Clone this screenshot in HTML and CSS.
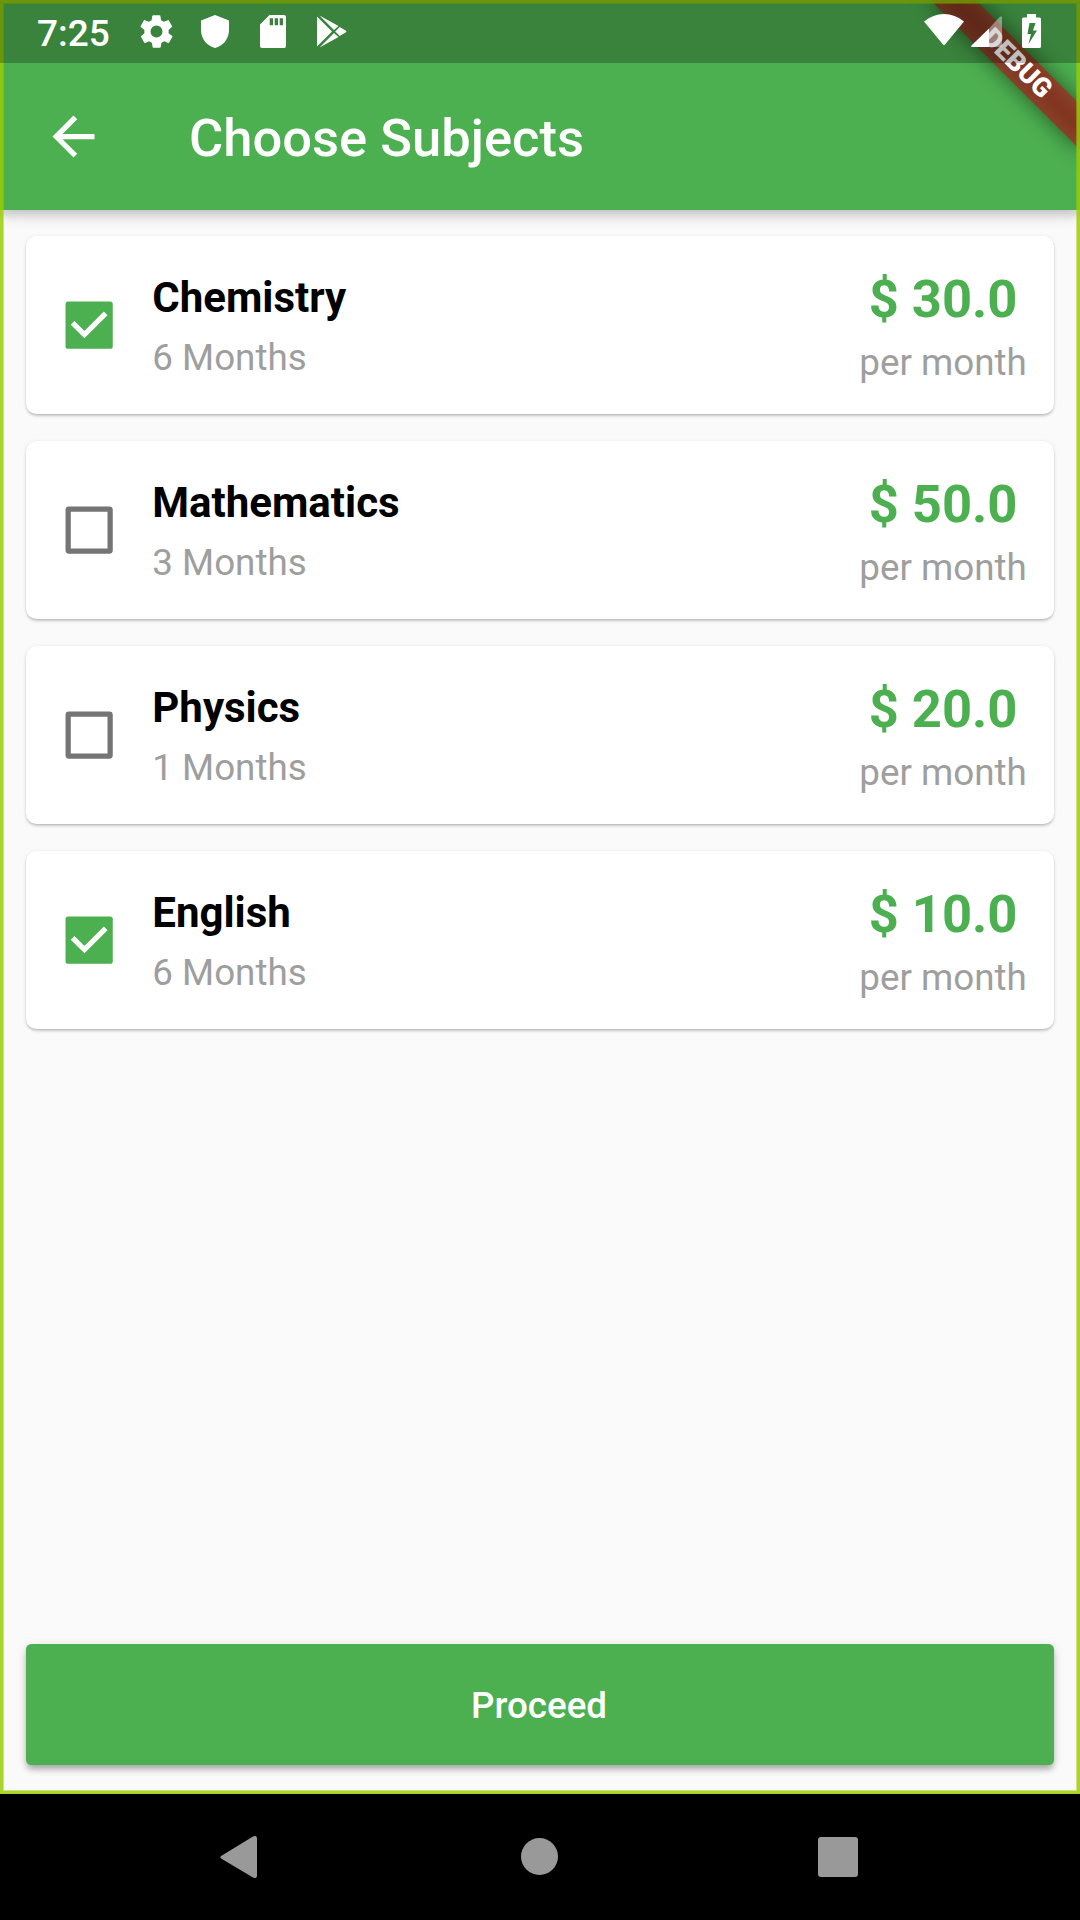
FILE: index.html
```html
<!DOCTYPE html>
<html lang="en">
<head>
<meta charset="utf-8">
<title>Choose Subjects</title>
<link rel="stylesheet" href="styles.css">
</head>
<body>
<div class="screen">
  <main class="app">
    <header class="app-bar">
      <svg class="back" viewBox="0 0 24 24"><path d="M20 11H7.83l5.59-5.59L12 4l-8 8 8 8 1.41-1.41L7.83 13H20v-2z"/></svg>
      <h1 class="title">Choose Subjects</h1>
    </header>
    <section class="list">
      <article class="card">
        <svg class="check" viewBox="-.2 -.2 18.29 18.29"><rect class="box-on" width="18" height="18" rx="1"/><path class="tick" d="M2.7 8.1L7.2 12.6L15.3 4.5"/></svg>
        <div class="info"><h2 class="name">Chemistry</h2><p class="note">6 Months</p></div>
        <div class="cost"><p class="price">$ 30.0</p><p class="note">per month</p></div>
      </article>
      <article class="card">
        <svg class="check" viewBox="-.2 -.2 18.29 18.29"><rect class="box-off" x="1" y="1" width="16" height="16" rx=".3"/></svg>
        <div class="info"><h2 class="name">Mathematics</h2><p class="note">3 Months</p></div>
        <div class="cost"><p class="price">$ 50.0</p><p class="note">per month</p></div>
      </article>
      <article class="card">
        <svg class="check" viewBox="-.2 -.2 18.29 18.29"><rect class="box-off" x="1" y="1" width="16" height="16" rx=".3"/></svg>
        <div class="info"><h2 class="name">Physics</h2><p class="note">1 Months</p></div>
        <div class="cost"><p class="price">$ 20.0</p><p class="note">per month</p></div>
      </article>
      <article class="card">
        <svg class="check" viewBox="-.2 -.2 18.29 18.29"><rect class="box-on" width="18" height="18" rx="1"/><path class="tick" d="M2.7 8.1L7.2 12.6L15.3 4.5"/></svg>
        <div class="info"><h2 class="name">English</h2><p class="note">6 Months</p></div>
        <div class="cost"><p class="price">$ 10.0</p><p class="note">per month</p></div>
      </article>
    </section>
    <button class="proceed" type="button">Proceed</button>
    <div class="banner">DEBUG</div>
    <div class="outline"></div>
  </main>
  <div class="status">
    <span class="clock">7:25</span>
    <svg class="icon gear" viewBox="0 0 24 24"><path d="M19.4 13c0-.3.1-.6.1-1s0-.7-.1-1l2.100-1.700c.2-.1.200-.4.100-.6l-2-3.500c-.1-.2-.4-.3-.6-.2l-2.500 1c-.5-.4-1.100-.7-1.700-1l-.4-2.600c0-.2-.2-.4-.5-.4h-4c-.2 0-.4.2-.5.4l-.4 2.600c-.6.3-1.200.6-1.700 1l-2.500-1c-.2-.1-.5 0-.6.2l-2 3.500c-.1.2-.1.5.1.6L4.600 11c0 .3-.1.700-.1 1s0 .7.100 1l-2.100 1.700c-.2.1-.2.400-.1.600l2 3.500c.1.2.4.3.6.2l2.500-1c.5.4 1.100.7 1.700 1l.4 2.600c0 .2.200.4.500.4h4c.2 0 .4-.2.500-.4l.4-2.600c.6-.3 1.200-.6 1.700-1l2.500 1c.2.1.5 0 .6-.2l2-3.500c.1-.2.1-.5-.1-.6zM12 15.700a3.700 3.700 0 1 1 0-7.400 3.700 3.700 0 0 1 0 7.400z"/></svg>
    <svg class="icon shield" viewBox="0 0 28 33"><path d="M14 0L28 5.500V15C28 24 22 31 14 33C6 31 0 24 0 15V5.500z"/></svg>
    <svg class="icon sd" viewBox="0 0 26 33"><path fill-rule="evenodd" d="M9.500 0H24a2 2 0 0 1 2 2V31a2 2 0 0 1-2 2H2a2 2 0 0 1-2-2V9.500zM9.700 3.300V10.300H13V3.300zM14.700 3.300V10.300H18V3.300zM19.700 3.300V10.300H23V3.300z"/></svg>
    <svg class="icon play" viewBox="0 0 30 33"><path d="M0 1.500L15 16.500L0 31.500zM2.500 .5L21.500 11L17 15zM2.500 32.500L21.500 22L17 18zM22.700 12L29 15.700Q30 16.500 29 17.300L22.700 21L18.200 16.500z"/></svg>
    <div class="signals">
      <svg class="icon wifi" viewBox="0 0 40 32"><path d="M0 7.500Q9 0 20 0T40 7.500L21 30.500Q20 31.700 19 30.500z"/></svg>
      <svg class="icon cell" viewBox="0 0 31 31"><path class="dim" d="M18 12.500L29 .8Q31 -.5 31 2V31H18z"/><path d="M18 12.500V31H1Q-.5 31 .5 29.500z"/></svg>
      <svg class="icon battery" viewBox="0 0 19 34"><path fill-rule="evenodd" d="M5 0H14V3.500H17.500a1.500 1.500 0 0 1 1.500 1.500V32.500a1.500 1.500 0 0 1-1.500 1.500H1.500A1.500 1.500 0 0 1 0 32.500V5A1.500 1.500 0 0 1 1.500 3.500H5zM7.500 9L5.500 20H9L6.500 30L15 16.500H11L13.500 9z"/></svg>
    </div>
  </div>
  <nav class="nav">
    <svg class="nav-icon" viewBox="0 0 42 42"><path d="M2.500 19.700L34 .5Q38 -1.200 38 2.500V39.500Q38 43.200 34 41.500L2.500 22.700Q0 21 2.500 19.700z"/></svg>
    <svg class="nav-icon" viewBox="0 0 42 42"><circle cx="21.500" cy="20.500" r="18.500"/></svg>
    <svg class="nav-icon" viewBox="0 0 42 42"><rect x="1" y="1" width="40" height="40" rx="3"/></svg>
  </nav>
</div>
</body>
</html>
```
FILE: styles.css
```css
* { box-sizing: border-box; }
body, h1, h2, p { margin: 0; }
body { font-family: Roboto, sans-serif; background: #000; }
svg { display: block; flex: none; }

.screen {
  position: relative;
  width: 1080px;
  height: 1920px;
  display: flex;
  flex-direction: column;
  overflow: hidden;
}
.app {
  position: relative;
  height: 1794px;
  display: flex;
  flex-direction: column;
  background: #fafafa;
  overflow: hidden;
}
.app-bar {
  height: 210px;
  padding: 63px 42px 0 42px;
  display: flex;
  align-items: center;
  gap: 84px;
  background: #4caf50;
  color: #fff;
  box-shadow: 0 4px 9px rgba(0,0,0,.14), 0 8px 12px rgba(0,0,0,.07), 0 3px 22px rgba(0,0,0,.05);
}
.back { width: 63px; height: 63px; fill: #fff; }
.title { padding-top: 2px; font-size: 52.5px; font-weight: 500; line-height: 62px; }

.list {
  flex: 1;
  padding: 26.25px;
  display: flex;
  flex-direction: column;
  gap: 26.9px;
}
.card {
  height: 178.1px;
  padding: 0 27px 0 39px;
  display: flex;
  align-items: center;
  background: #fff;
  border-radius: 10.5px;
  box-shadow: 0 3px 3px -1px rgba(0,0,0,.12), 0 1px 2px rgba(0,0,0,.1), 0 1px 4px rgba(0,0,0,.1);
}
.check { width: 48px; height: 48px; }
.box-on { fill: #4caf50; }
.box-off { fill: none; stroke: #757575; stroke-width: 2; }
.tick { fill: none; stroke: #fff; stroke-width: 2; }
.info { flex: 1; margin-left: 39.05px; }
.name { font-size: 42px; font-weight: 700; line-height: 49px; color: #000; }
.note { font-size: 36.75px; line-height: 43px; color: #9e9e9e; }
.info .note { padding-top: 14px; margin-bottom: -1px; }
.cost { padding-top: 1.5px; text-align: center; }
.price { font-size: 52.5px; font-weight: 700; line-height: 62px; color: #4caf50; }
.cost .note { margin-top: 11px; }

.proceed {
  height: 120.75px;
  margin: 0 26.25px 29px;
  padding: 2px 2px 0 0;
  border: 0;
  border-radius: 5.25px;
  background: #4caf50;
  color: #fff;
  font: 500 36.75px/43px Roboto, sans-serif;
  box-shadow: 0 5px 6px -2px rgba(0,0,0,.2), 0 5px 6px rgba(0,0,0,.12), 0 2px 12px rgba(0,0,0,.1);
}

/* Corner ribbon: blurred shadow beneath a translucent red band */
.banner {
  position: absolute;
  left: 975px;
  top: 73.5px;
  width: 210px;
  height: 31.5px;
  transform: rotate(45deg);
  transform-origin: 105px -73.5px;
  color: #fff;
  font-size: 26.8px;
  font-weight: 900;
  line-height: 31.5px;
  text-align: center;
}
.banner::before, .banner::after {
  content: "";
  position: absolute;
  inset: 0;
  z-index: -1;
}
.banner::before { z-index: -2; background: rgba(0,0,0,.5); filter: blur(10.4px); }
.banner::after { background: rgba(183,28,28,.627); }
.outline {
  position: absolute;
  inset: 0;
  border: 3px solid rgba(153,205,2,.83);
  box-shadow: inset 0 0 0 1px rgba(153,205,2,.5);
}

.status {
  position: absolute;
  top: 0;
  left: 0;
  width: 1080px;
  height: 63px;
  padding: 0 39px 0 37px;
  display: flex;
  align-items: center;
  background: rgba(0,0,0,.25);
  color: #fff;
}
.clock { width: 104px; font-size: 37px; font-weight: 500; line-height: 43px; padding-top: 3px; }
.icon { fill: #fff; }
.gear { width: 39px; height: 39px; margin-left: -4px; }
.shield { width: 28px; height: 33px; margin-left: 25px; }
.sd { width: 26px; height: 33px; margin-left: 31px; }
.play { width: 30px; height: 33px; margin-left: 31px; }
.signals { margin-left: auto; display: flex; align-items: center; }
.wifi { width: 40px; height: 32px; margin-bottom: 3px; }
.cell { width: 31px; height: 31px; margin-left: 7px; }
.battery { width: 19px; height: 34px; margin-left: 20px; margin-bottom: 1px; }
.dim { fill-opacity: .4; }

.nav {
  height: 126px;
  padding: 0 221px 1px 219px;
  display: flex;
  align-items: center;
  justify-content: space-between;
  background: #000;
}
.nav-icon { width: 42px; height: 42px; fill: #999; }
```
